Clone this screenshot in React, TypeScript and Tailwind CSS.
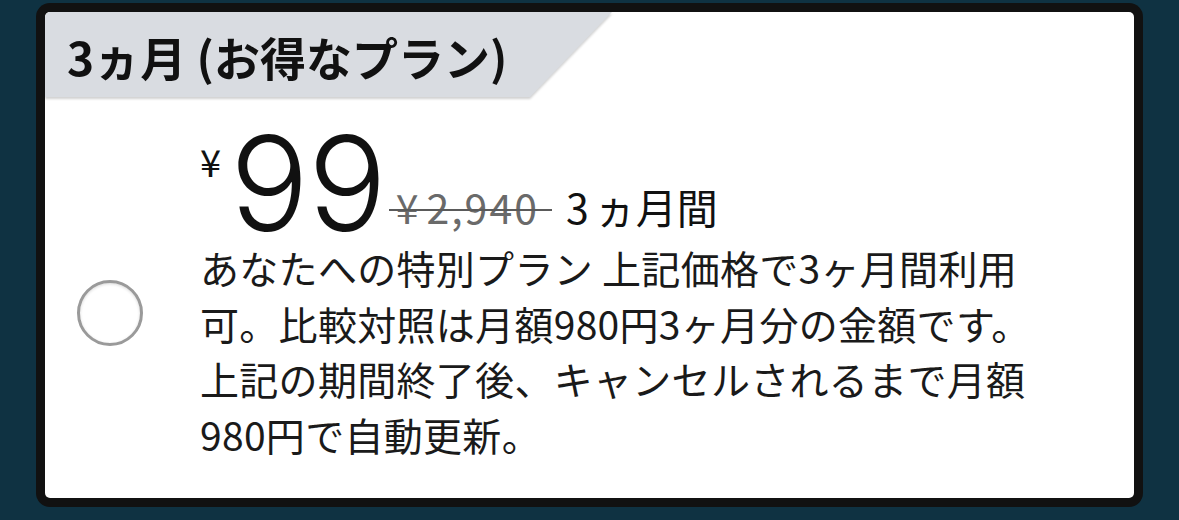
import React from 'react';

const JP = "font-['Noto_Sans_CJK_JP',sans-serif]";

const Radio = () => (
  <div className="w-[66px] h-[66px] rounded-full border-[3px] border-[#9a9a9a] bg-white shadow-[inset_0_1px_3px_rgba(0,0,0,0.15)]" />
);

export default function App() {
  return (
    <div className="w-[1179px] h-[520px] bg-[#0f3242] pt-[3px] pl-[36px]">
      <div className="w-[1107px] h-[504px] rounded-[14px] bg-[#111] p-[9px]">
        <div className={`h-full rounded-[5px] bg-white flex flex-col overflow-hidden ${JP}`}>
          {/* plan tab */}
          <div className="drop-shadow-[0_2px_1px_rgba(0,0,0,0.18)]">
            <div className="w-[567px] h-[85px] bg-[#d9dce1] flex items-center pl-[22px] pt-[2px] [clip-path:polygon(0_0,100%_0,calc(100%-82px)_100%,0_100%)]">
              <span className="text-[46px] font-bold text-[#111] leading-none">3ヵ月 (お得なプラン)</span>
            </div>
          </div>

          <div className="flex flex-1">
            <div className="w-[155px] pl-[32px] pt-[183px]">
              <Radio />
            </div>

            <div className="flex flex-col pt-[35px]">
              <div className="flex items-end text-[#111]">
                <span className="text-[38px] leading-none self-start mt-[10px] mr-[9px]">¥</span>
                <span className="font-['Inter',sans-serif] font-light text-[131px] leading-[104px] tracking-[-1px]">99</span>
                <span className="relative text-[41px] leading-none text-[#6a6a6a] tracking-[2px] ml-[3px] pl-[7px] pr-[13px] mb-[9px]">
                  <span className="mr-[6px]">¥</span>2,940
                  <span className="absolute left-0 right-0 top-[55%] h-[2px] bg-[#5a5a5a]" />
                </span>
                <span className="text-[41px] leading-none ml-[14px] mb-[9px]">
                  3<span className="ml-[6px]">ヵ月間</span>
                </span>
              </div>
              <p className="mt-[4px] text-[39px] leading-[55.5px] text-[#1a1a1a] tracking-[0.3px]">
                あなたへの特別プラン 上記価格で3ヶ月間利用<br />
                可。比較対照は月額980円3ヶ月分の金額です。<br />
                上記の期間終了後、キャンセルされるまで月額<br />
                980円で自動更新。
              </p>
            </div>
          </div>
        </div>
      </div>
    </div>
  );
}
